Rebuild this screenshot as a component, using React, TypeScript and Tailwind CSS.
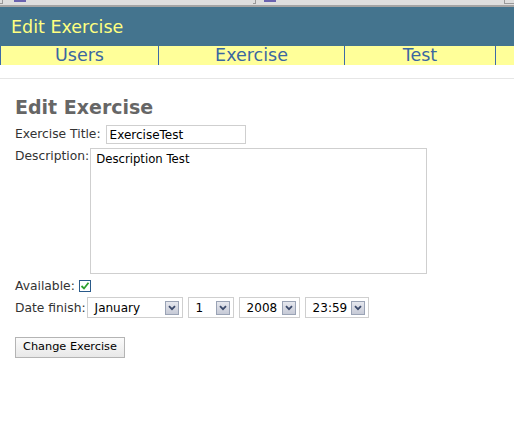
import React from "react";

const font = { fontFamily: '"DejaVu Sans", Verdana, sans-serif' };

function Arrow() {
  return (
    <span className="flex h-[14px] w-[14px] items-center justify-center border border-[#9aa3b5] bg-[linear-gradient(#e6e8ee,#c6cad6)]">
      <svg width="8" height="6" viewBox="0 0 8 6">
        <path d="M1 1.2 L4 4.2 L7 1.2" stroke="#3b4a6b" strokeWidth="1.8" fill="none" />
      </svg>
    </span>
  );
}

function Select({ w, label }: { w: string; label: string }) {
  return (
    <div className={`flex h-[21px] items-center justify-between border border-[#cfcfcf] bg-white pl-[7px] pr-[3px] ${w}`}>
      <span className="text-[12px] text-black">{label}</span>
      <Arrow />
    </div>
  );
}

export default function App() {
  return (
    <div className="h-[424px] w-[514px] bg-white text-[12.3px] text-[#333]" style={font}>
      {/* browser remnant strip */}
      <div className="relative h-[7px] border-b-2 border-[#a4a4a4] bg-[#dedede]">
        <div className="absolute left-[14px] top-0 h-[2px] w-[12px] bg-[#6a63b0]" />
        <div className="absolute left-[264px] top-0 h-[2px] w-[12px] bg-[#6a63b0]" />
        <div className="absolute left-0 top-0 h-[4px] w-[3px] border-r border-b border-[#999]" />
        <div className="absolute left-[253px] top-0 h-[4px] w-[3px] border-r border-b border-[#999]" />
        <div className="absolute right-0 top-0 h-[4px] w-[10px] border-l border-b border-[#999]" />
      </div>
      {/* header */}
      <div className="flex h-[39px] items-center bg-[#44748e] pl-[11px] pt-[1px] text-[17.5px] text-[#ffff80]">
        Edit Exercise
      </div>
      {/* nav */}
      <div className="flex h-[19px] bg-[#ffff99] text-[17.5px] leading-[19px] text-[#3b67a1]">
        <div className="w-[159px] border-l border-r border-[#3d6aa8] text-center">Users</div>
        <div className="w-[186px] border-r border-[#3d6aa8] text-center">Exercise</div>
        <div className="w-[151px] border-r border-[#3d6aa8] text-center">Test</div>
        <div className="flex-1" />
      </div>
      <div className="h-[14px] border-b border-[#e6e6e6]" />
      {/* content */}
      <div className="px-[15px] pt-[17px]">
        <h2 className="text-[19px] font-bold leading-[22px] text-[#666]">Edit Exercise</h2>
        <div className="mt-[7px] flex items-center">
          <span>Exercise Title:</span>
          <div className="ml-[5px] flex h-[19px] w-[140px] items-center border border-[#cfcfcf] px-[3px] text-[12px] text-black">
            ExerciseTest
          </div>
        </div>
        <div className="mt-[4px] flex items-start">
          <span className="mt-[-1px]">Description:</span>
          <div className="ml-[1px] h-[126px] w-[337px] border border-[#cfcfcf] px-[5px] pt-[2px] text-[11.7px] text-black">
            Description Test
          </div>
        </div>
        <div className="mt-[3px] flex items-center">
          <span>Available:</span>
          <span className="ml-[4px] flex h-[12px] w-[12px] items-center justify-center border border-[#2a5a8a] bg-white">
            <svg width="10" height="10" viewBox="0 0 10 10">
              <path d="M1.5 5 L4 7.5 L8.5 1.8" stroke="#2fa02f" strokeWidth="1.8" fill="none" />
            </svg>
          </span>
        </div>
        <div className="mt-[2px] flex items-center">
          <span>Date finish:</span>
          <div className="ml-[1px] flex gap-[5px]">
            <Select w="w-[96px]" label="January" />
            <Select w="w-[46px]" label="1" />
            <Select w="w-[61px]" label="2008" />
            <Select w="w-[64px]" label="23:59" />
          </div>
        </div>
        <button className="mt-[19px] h-[21px] w-[110px] border border-[#b4b4b4] bg-[linear-gradient(#fbfbfb,#e8e8e8)] text-[11.3px] text-black" style={font}>
          Change Exercise
        </button>
      </div>
    </div>
  );
}
